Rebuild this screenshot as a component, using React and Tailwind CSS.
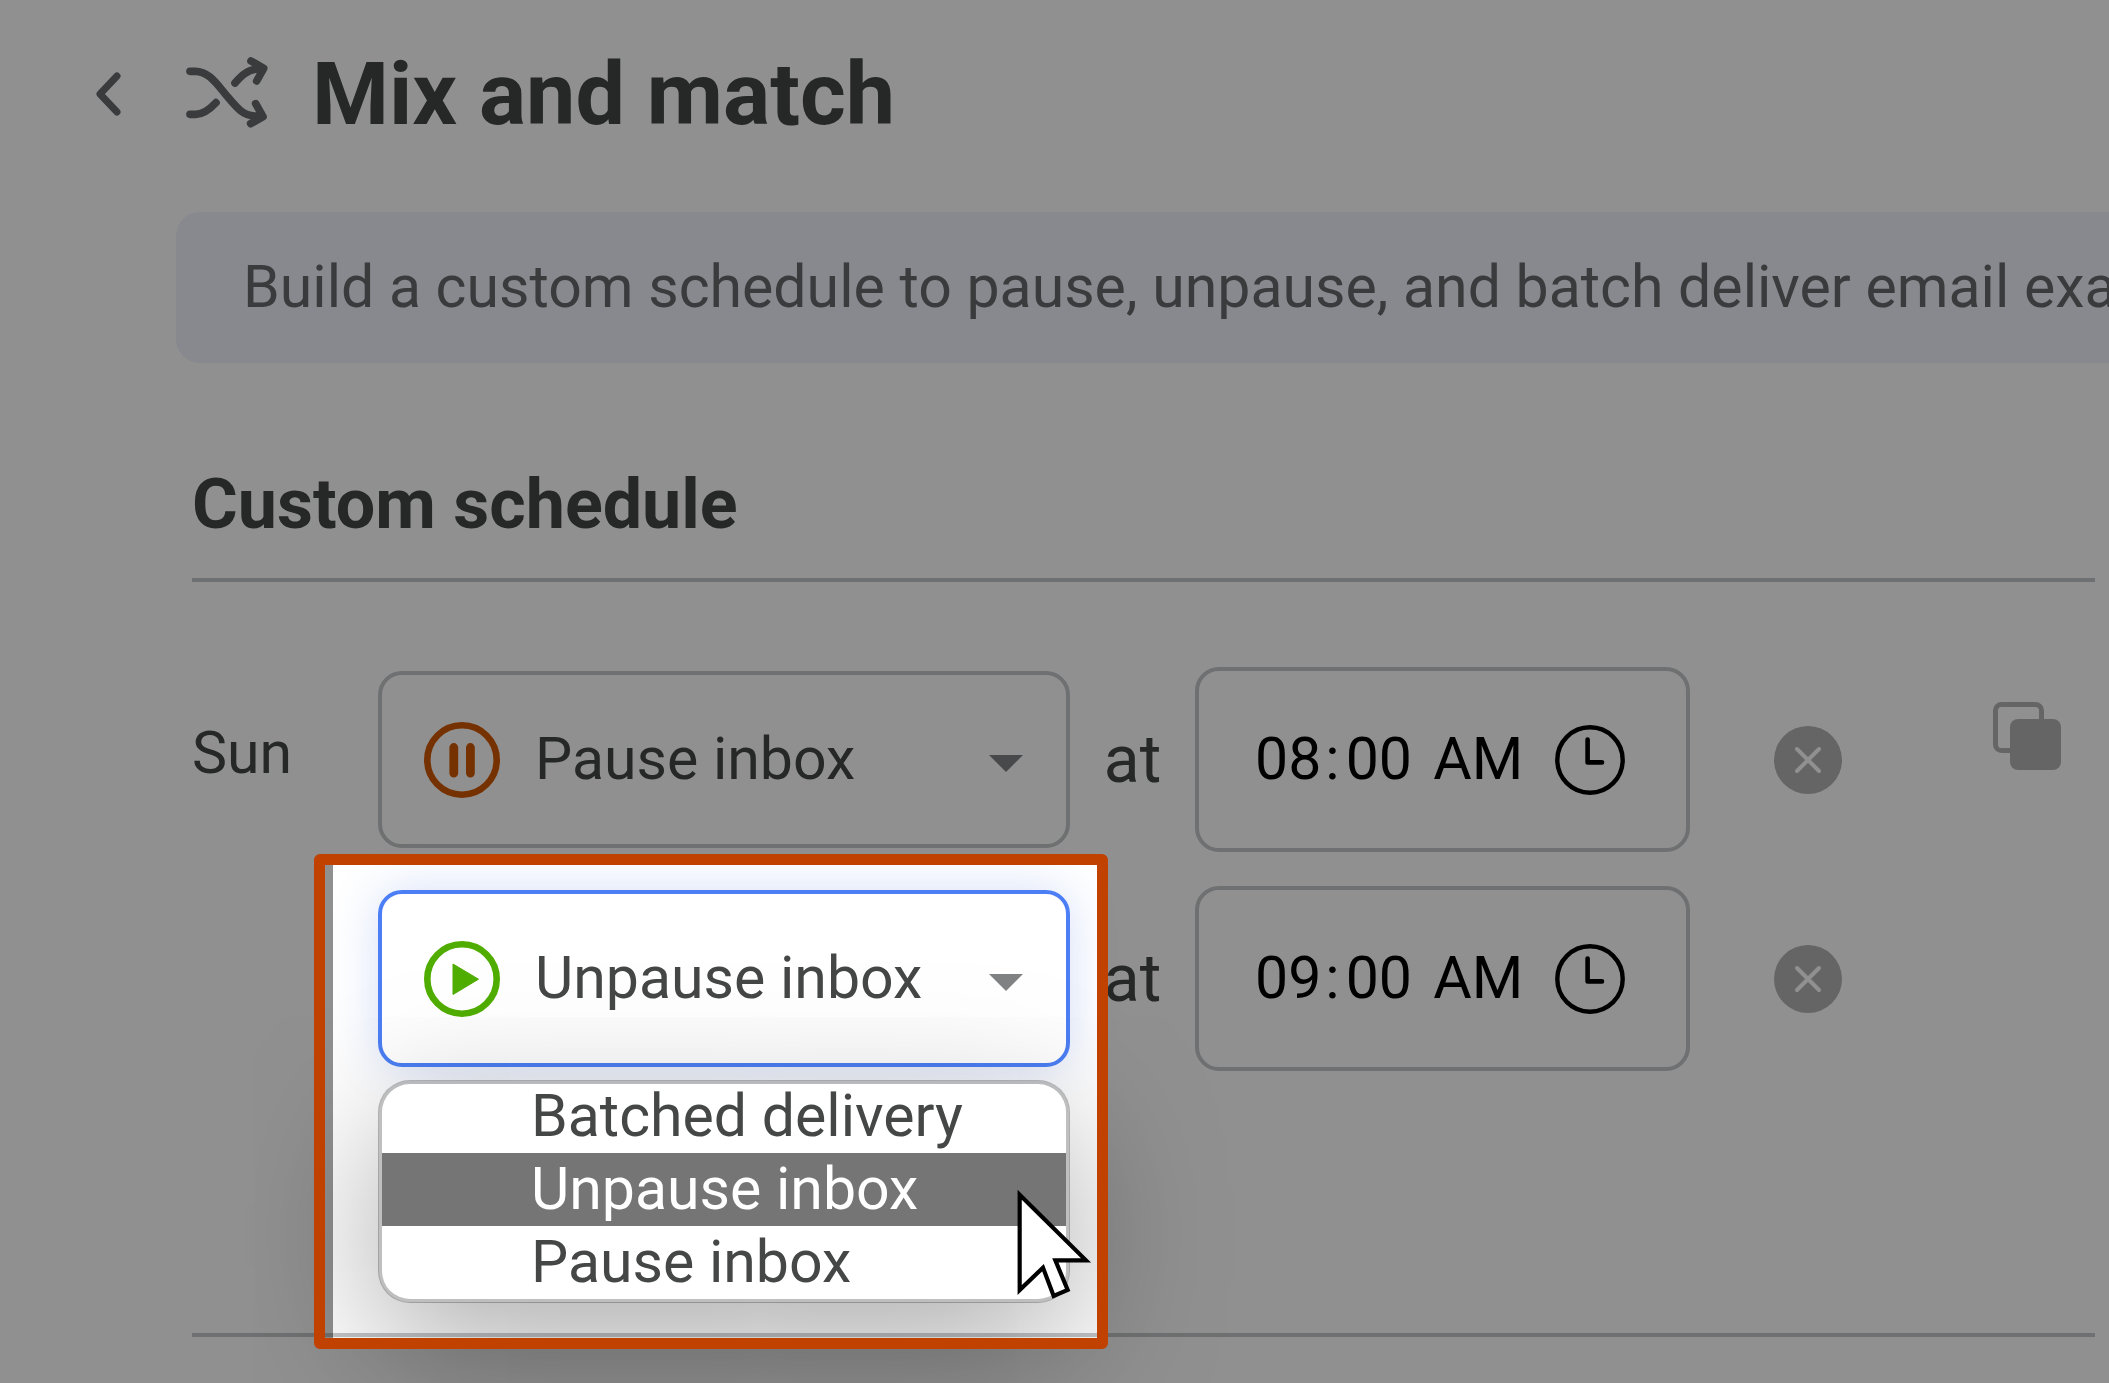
import { useState } from "react";

const ACTIONS = ["Batched delivery", "Unpause inbox", "Pause inbox"];

const PauseIcon = () => (
  <svg viewBox="0 0 76 76" className="h-[76px] w-[76px]" fill="none" stroke="#d15800" aria-hidden="true">
    <circle cx="38" cy="38" r="34.7" strokeWidth="6.6" />
    <path d="M29.8 25.5v25.6M46.4 25.5v25.6" strokeWidth="8.8" strokeLinecap="round" />
  </svg>
);

const PlayIcon = () => (
  <svg viewBox="0 0 76 76" className="h-[76px] w-[76px]" fill="none" aria-hidden="true">
    <circle cx="38" cy="38" r="34.7" stroke="#50ad00" strokeWidth="6.6" />
    <path d="M29 23v30.5L54.5 38.2z" fill="#50ad00" stroke="#50ad00" strokeWidth="1" strokeLinejoin="round" />
  </svg>
);

const ShuffleIcon = () => (
  <svg
    viewBox="0 0 360 330"
    className="h-[110px] w-[120px]"
    fill="none"
    stroke="#66696b"
    strokeWidth="23"
    strokeLinecap="round"
    strokeLinejoin="round"
    aria-hidden="true"
  >
    <path d="M60 97H76C118 97 142 138 170 170C200 206 218 229 254 231H268" />
    <path d="M60 226H78C102 226 122 208 138 191" />
    <path d="M195 132C214 110 232 93 262 90H270" />
    <path d="M243 66L281 88L260 126" />
    <path d="M257 194L279 233L242 254" />
  </svg>
);

const ClockIcon = () => (
  <svg viewBox="0 0 70 70" className="h-[70px] w-[70px]" fill="none" stroke="#000" aria-hidden="true">
    <circle cx="35" cy="35" r="32.7" strokeWidth="4.4" />
    <path d="M32.6 14.6V37.4H47" strokeWidth="4.6" strokeLinecap="round" strokeLinejoin="round" />
  </svg>
);

const RemoveIcon = () => (
  <svg viewBox="0 0 68 68" className="h-[68px] w-[68px]" fill="none" aria-hidden="true">
    <circle cx="34" cy="34" r="34" fill="#b4b4b4" />
    <path d="M23 23L45 45M45 23L23 45" stroke="#fff" strokeWidth="4" strokeLinecap="round" />
  </svg>
);

const CopyIcon = () => (
  <svg viewBox="0 0 68 68" className="h-[68px] w-[68px]" fill="none" aria-hidden="true">
    <rect x="2.5" y="2.5" width="46" height="46" rx="6" stroke="#b4b4b4" strokeWidth="5" />
    <rect x="17" y="17" width="51" height="51" rx="8" fill="#b4b4b4" />
  </svg>
);

// Menu, dimmed backdrop and pointer that go with the select being edited
function OpenMenu({ action, onPick }) {
  return (
    <>
      <ul
        role="listbox"
        aria-label="Action"
        className="absolute left-0 top-[190px] w-full overflow-hidden rounded-[32px] border-4 border-black/25 bg-white bg-clip-padding text-[59px] leading-[72px] text-[#444746] shadow-[0_44px_150px_rgba(0,0,0,0.34)]"
      >
        {ACTIONS.map((name) => (
          <li
            key={name}
            role="option"
            aria-selected={name === action}
            onClick={() => onPick(name)}
            className={`h-[73px] cursor-pointer pl-[149px] first:-mt-1 ${
              name === action ? "bg-[#757575] text-white" : ""
            }`}
          >
            {name}
          </li>
        ))}
      </ul>
      <div className="pointer-events-none absolute -left-[45px] -right-[27px] -top-[25px] z-10 h-[473px] shadow-[0_0_0_9999px_rgba(0,0,0,0.435)]" />
      <div className="pointer-events-none absolute -left-[64px] -right-[38px] -top-[36px] z-20 h-[495px] rounded-md border-[11px] border-[#c14100]" />
      <svg
        viewBox="170 88 225 333"
        className="pointer-events-none absolute left-[639px] top-[299px] z-30 h-[111px] w-[75px]"
        aria-hidden="true"
      >
        <path
          d="M178 105L377 302H285L322 391L280 409L248 324L178 391z"
          fill="#fff"
          stroke="#000"
          strokeWidth="12.5"
        />
      </svg>
    </>
  );
}

function ScheduleRow({ id, action, time, open, onChange }) {
  return (
    <div className="flex h-[185px] items-center">
      <div className="relative w-[692px]">
        <div className="pointer-events-none absolute inset-y-0 left-[46px] flex items-center">
          {action === "Pause inbox" ? <PauseIcon /> : <PlayIcon />}
        </div>
        <select
          aria-label="Action"
          value={action}
          onChange={(e) => onChange({ action: e.target.value })}
          className={`block h-[177px] w-full appearance-none rounded-3xl border-4 bg-transparent pl-[153px] text-[59px] text-[#444746] outline-none ${
            open ? "border-[#4c7ff5] shadow-[0_0_48px_rgba(60,110,220,0.22)]" : "border-[#c4c7c8]"
          }`}
        >
          {ACTIONS.map((name) => (
            <option key={name}>{name}</option>
          ))}
        </select>
        <div className="pointer-events-none absolute inset-y-0 right-[47px] flex items-center">
          <svg viewBox="0 0 34 17" className="mt-2 h-[17px] w-[34px]" aria-hidden="true">
            <path d="M0 0H34L17 17z" fill="#808284" />
          </svg>
        </div>
        {open && <OpenMenu action={action} onPick={(name) => onChange({ action: name })} />}
      </div>
      <label htmlFor={`time-${id}`} className="w-[125px] text-center text-[66px] text-[#444746]">
        at
      </label>
      <div className="flex h-[185px] w-[495px] items-center justify-between rounded-3xl border-4 border-[#c4c7c8] pl-[52px] pr-[61px]">
        <input
          id={`time-${id}`}
          type="time"
          value={time}
          onChange={(e) => onChange({ time: e.target.value })}
          className="w-[290px] text-[59px] text-black outline-none [&::-webkit-calendar-picker-indicator]:hidden [&::-webkit-datetime-edit-ampm-field]:pl-2 [&::-webkit-datetime-edit-hour-field]:px-1 [&::-webkit-datetime-edit-minute-field]:px-[6px]"
        />
        <ClockIcon />
      </div>
      <button type="button" aria-label="Remove" className="ml-[84px]">
        <RemoveIcon />
      </button>
    </div>
  );
}

export default function App() {
  const [rows, setRows] = useState([
    { id: 1, action: "Pause inbox", time: "08:00" },
    { id: 2, action: "Unpause inbox", time: "09:00", open: true },
  ]);

  const updateRow = (id, changes) => {
    setRows(rows.map((row) => (row.id === id ? { ...row, ...changes } : row)));
  };

  return (
    <div className="min-h-screen overflow-hidden bg-white pt-[46px] font-['Roboto',sans-serif] text-[#444746]">
      <header className="flex h-24 items-center pl-[94px]">
        <button type="button" aria-label="Back">
          <svg viewBox="0 0 28 44" className="h-[44px] w-[28px]" fill="none" aria-hidden="true">
            <path d="M23 4L6 22L23 40" stroke="#66696b" strokeWidth="7" strokeLinecap="round" strokeLinejoin="round" />
          </svg>
        </button>
        <div className="ml-12 mr-[22px]">
          <ShuffleIcon />
        </div>
        <h1 className="text-[88px] font-bold leading-[94px]">Mix and match</h1>
      </header>

      <div className="ml-44 mt-[70px] flex h-[151px] items-center overflow-hidden rounded-l-3xl bg-[#f1f3fb] pl-[67px]">
        <p className="whitespace-nowrap text-[59px] text-[#66696b]">
          Build a custom schedule to pause, unpause, and batch deliver email exactly
        </p>
      </div>

      <main className="ml-48 mr-[14px] mt-[102px]">
        <h2 className="border-b-4 border-[#c4c7c8] pb-[35px] text-[70px] font-bold leading-[78px]">
          Custom schedule
        </h2>
        <section className="flex items-start border-b-4 border-[#c4c7c8] pb-[262px] pt-[85px]">
          <h3 className="w-[186px] pt-[50px] text-[59px] leading-[72px]">Sun</h3>
          <div className="flex flex-col gap-[34px]">
            {rows.map((row) => (
              <ScheduleRow key={row.id} {...row} onChange={(changes) => updateRow(row.id, changes)} />
            ))}
          </div>
          <button type="button" aria-label="Copy schedule" className="ml-auto mr-[34px] mt-[35px]">
            <CopyIcon />
          </button>
        </section>
      </main>
    </div>
  );
}
